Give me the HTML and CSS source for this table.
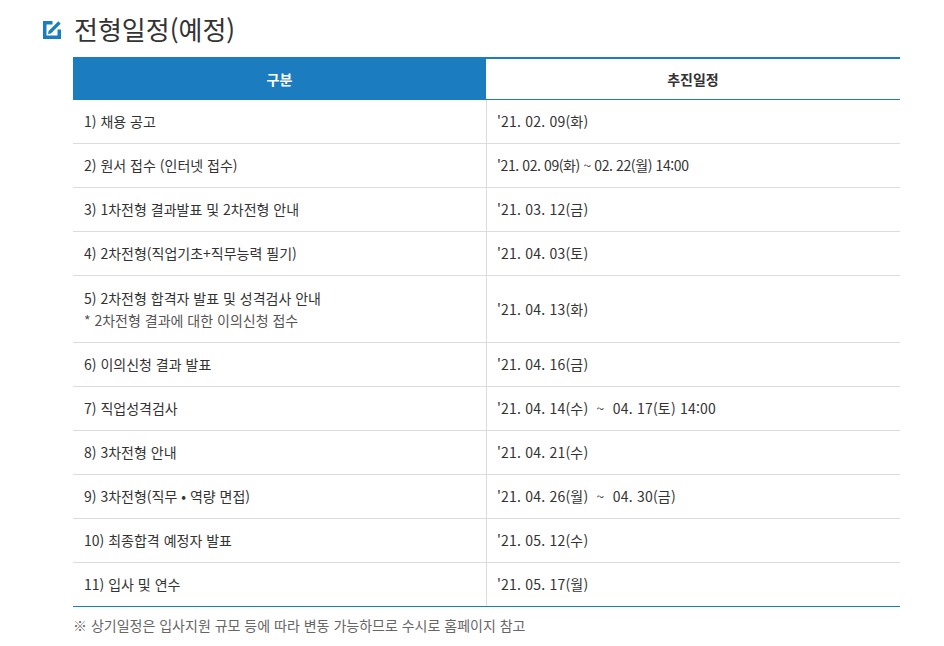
FILE: index.html
```html
<!DOCTYPE html>
<html lang="ko">
<head>
<meta charset="utf-8">
<title>전형일정(예정)</title>
<link rel="stylesheet" href="styles.css">
</head>
<body>
<div class="page">
  <h2 class="title">
    <svg class="icon" width="18" height="18" viewBox="0 0 18 18" aria-hidden="true">
      <path d="M9.5 1.75H1.75V16.25H16.25V8.5" fill="none" stroke="#1b7dc0" stroke-width="3.5"/>
      <path d="M6.5 11.5L16.5 1.5" fill="none" stroke="#1b7dc0" stroke-width="3.2"/>
      <path d="M5 13L5.6 10.3L7.7 12.4Z" fill="#1b7dc0"/>
    </svg>
    <span>전형일정(예정)</span>
  </h2>
  <div class="schedule">
    <div class="row head">
      <div class="cell hcell blue">구분</div>
      <div class="cell hcell">추진일정</div>
    </div>
    <div class="row"><div class="cell">1) 채용 공고</div><div class="cell date">'21. 02. 09(화)</div></div>
    <div class="row"><div class="cell">2) 원서 접수 (인터넷 접수)</div><div class="cell date tight">'21. 02. 09(화) ~ 02. 22(월) 14:00</div></div>
    <div class="row"><div class="cell">3) 1차전형 결과발표 및 2차전형 안내</div><div class="cell date">'21. 03. 12(금)</div></div>
    <div class="row"><div class="cell">4) 2차전형(직업기초+직무능력 필기)</div><div class="cell date">'21. 04. 03(토)</div></div>
    <div class="row"><div class="cell two">5) 2차전형 합격자 발표 및 성격검사 안내<br><span class="sub">* 2차전형 결과에 대한 이의신청 접수</span></div><div class="cell date">'21. 04. 13(화)</div></div>
    <div class="row"><div class="cell">6) 이의신청 결과 발표</div><div class="cell date">'21. 04. 16(금)</div></div>
    <div class="row"><div class="cell">7) 직업성격검사</div><div class="cell date">'21. 04. 14(수) &nbsp;~ &nbsp;04. 17(토) 14:00</div></div>
    <div class="row"><div class="cell">8) 3차전형 안내</div><div class="cell date">'21. 04. 21(수)</div></div>
    <div class="row"><div class="cell">9) 3차전형(직무 • 역량 면접)</div><div class="cell date">'21. 04. 26(월) &nbsp;~ &nbsp;04. 30(금)</div></div>
    <div class="row"><div class="cell">10) 최종합격 예정자 발표</div><div class="cell date">'21. 05. 12(수)</div></div>
    <div class="row last"><div class="cell">11) 입사 및 연수</div><div class="cell date">'21. 05. 17(월)</div></div>
  </div>
  <p class="note">※ 상기일정은 입사지원 규모 등에 따라 변동 가능하므로 수시로 홈페이지 참고</p>
</div>
</body>
</html>
```
FILE: styles.css
```css
* { box-sizing: border-box; }
html, body { margin: 0; padding: 0; background: #fff; }
body {
  font-family: "Noto Sans CJK KR", "Noto Sans", sans-serif;
  color: #333;
  font-size: 14px;
}
.page { padding: 11px 0 0 43px; width: 944px; }
.title {
  display: flex;
  align-items: center;
  gap: 13px;
  margin: 0;
  height: 36px;
  font-size: 26px;
  font-weight: 400;
  color: #333;
  line-height: 36px;
}
.icon { display: block; flex: none; margin-top: 1px; }
.schedule {
  margin: 10px 0 0 30px;
  width: 827px;
  border-top: 2px solid #1b7dc0;
  border-bottom: 1px solid #1b7dc0;
}
.row {
  display: grid;
  grid-template-columns: 413px 414px;
  border-bottom: 1px solid #dcdcdc;
}
.row.last { border-bottom: none; }
.row.head { border-bottom: 1px solid #1b7dc0; }
.cell {
  padding: 11px 11px;
  line-height: 21px;
  display: flex;
  align-items: center;
}
.cell.date { border-left: 1px solid #dcdcdc; padding-left: 10px; letter-spacing: 0.2px; }
.cell.tight { letter-spacing: -0.4px; }
.cell.two { display: block; line-height: 22px; padding: 11px 11px; }
.sub { color: #555; }
.hcell {
  height: 40px;
  padding: 0;
  justify-content: center;
  font-weight: 700;
  color: #333;
}
.hcell.blue { background: #1b7dc0; color: #fff; }
.note {
  margin: 8px 0 0 30px;
  line-height: 21px;
  color: #666;
  font-size: 14px;
}
```
